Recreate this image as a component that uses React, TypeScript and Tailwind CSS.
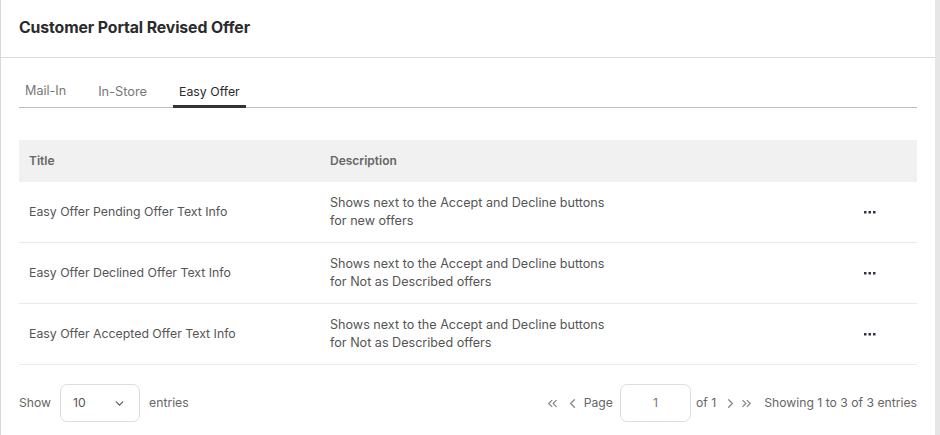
import React from "react";
import { ChevronDown, ChevronLeft, ChevronRight, ChevronsLeft, ChevronsRight } from "lucide-react";

const rows = [
  {
    title: "Easy Offer Pending Offer Text Info",
    desc: ["Shows next to the Accept and Decline buttons", "for new offers"],
  },
  {
    title: "Easy Offer Declined Offer Text Info",
    desc: ["Shows next to the Accept and Decline buttons", "for Not as Described offers"],
  },
  {
    title: "Easy Offer Accepted Offer Text Info",
    desc: ["Shows next to the Accept and Decline buttons", "for Not as Described offers"],
  },
];

function Dots() {
  return (
    <svg width="12" height="3" viewBox="0 0 12 3" className="block">
      <rect x="0" y="0" width="2.5" height="2.5" fill="#2f3542" />
      <rect x="4.5" y="0" width="2.5" height="2.5" fill="#2f3542" />
      <rect x="9" y="0" width="2.5" height="2.5" fill="#2f3542" />
    </svg>
  );
}

export default function App() {
  const font = { fontFamily: "Inter, 'Noto Sans', sans-serif" };
  return (
    <div className="flex w-[940px] h-[435px] bg-[#e6e6e6]" style={font}>
      <div className="w-[935px] h-full bg-white border-l border-[#d9d9d9] flex flex-col">
        <div className="h-[58px] shrink-0 border-b border-[#dcdcdc] flex items-center pl-[18px]">
          <h1 className="text-[15.8px] font-bold text-[#2b2b2b] tracking-[-0.1px] -mt-[2px]">Customer Portal Revised Offer</h1>
        </div>

        <div className="px-[18px]">
          <div className="flex items-end h-[50px] border-b border-[#bdbdbd]">
            <div className="px-[6px] pb-[6px] text-[12.6px] text-[#777]">Mail-In</div>
            <div className="ml-[20px] px-[6px] pb-[6px] text-[12.8px] text-[#777]">In-Store</div>
            <div className="ml-[20px] px-[6px] pb-[4px] -mb-px border-b-[3px] border-[#333] text-[12.3px] text-[#2b2b2b]">
              Easy Offer
            </div>
          </div>

          <div className="mt-[32px] w-[898px]">
            <div className="flex items-center h-[42px] bg-[#f1f1f1] text-[12px] font-semibold text-[#666]">
              <div className="w-[301px] pl-[10px]">Title</div>
              <div className="flex-1 pl-[10px]">Description</div>
              <div className="w-[94px]" />
            </div>
            {rows.map((r) => (
              <div key={r.title} className="flex items-center h-[61px] border-b border-[#e9e9ef] text-[12.5px] text-[#555]">
                <div className="w-[301px] pl-[10px] text-[12.3px]">{r.title}</div>
                <div className="flex-1 pl-[10px] leading-[18px] text-[12.6px]">
                  <div>{r.desc[0]}</div>
                  <div>{r.desc[1]}</div>
                </div>
                <div className="w-[94px] flex justify-center">
                  <Dots />
                </div>
              </div>
            ))}
          </div>

          <div className="flex items-center justify-between w-[898px] mt-[19px] text-[12.2px] text-[#666]">
            <div className="flex items-center">
              <span>Show</span>
              <div className="ml-[9px] w-[80px] h-[38px] border border-[#dedede] rounded-[7px] flex items-center justify-between pl-[12px] pr-[13px]">
                <span className="text-[#555]">10</span>
                <ChevronDown size={13} strokeWidth={2} className="text-[#555]" />
              </div>
              <span className="ml-[9px]">entries</span>
            </div>
            <div className="flex items-center">
              <ChevronsLeft size={15} strokeWidth={2} className="text-[#888]" />
              <ChevronLeft size={15} strokeWidth={2} className="ml-[5px] text-[#888]" />
              <span className="ml-[4px]">Page</span>
              <div className="ml-[7px] w-[71px] h-[38px] border border-[#dedede] rounded-[7px] flex items-center justify-center text-[#777]">
                1
              </div>
              <span className="ml-[5px]">of 1</span>
              <ChevronRight size={15} strokeWidth={2} className="ml-[7px] text-[#888]" />
              <ChevronsRight size={15} strokeWidth={2} className="ml-[1px] text-[#888]" />
              <span className="ml-[10px]">Showing 1 to 3 of 3 entries</span>
            </div>
          </div>
        </div>
      </div>
    </div>
  );
}
